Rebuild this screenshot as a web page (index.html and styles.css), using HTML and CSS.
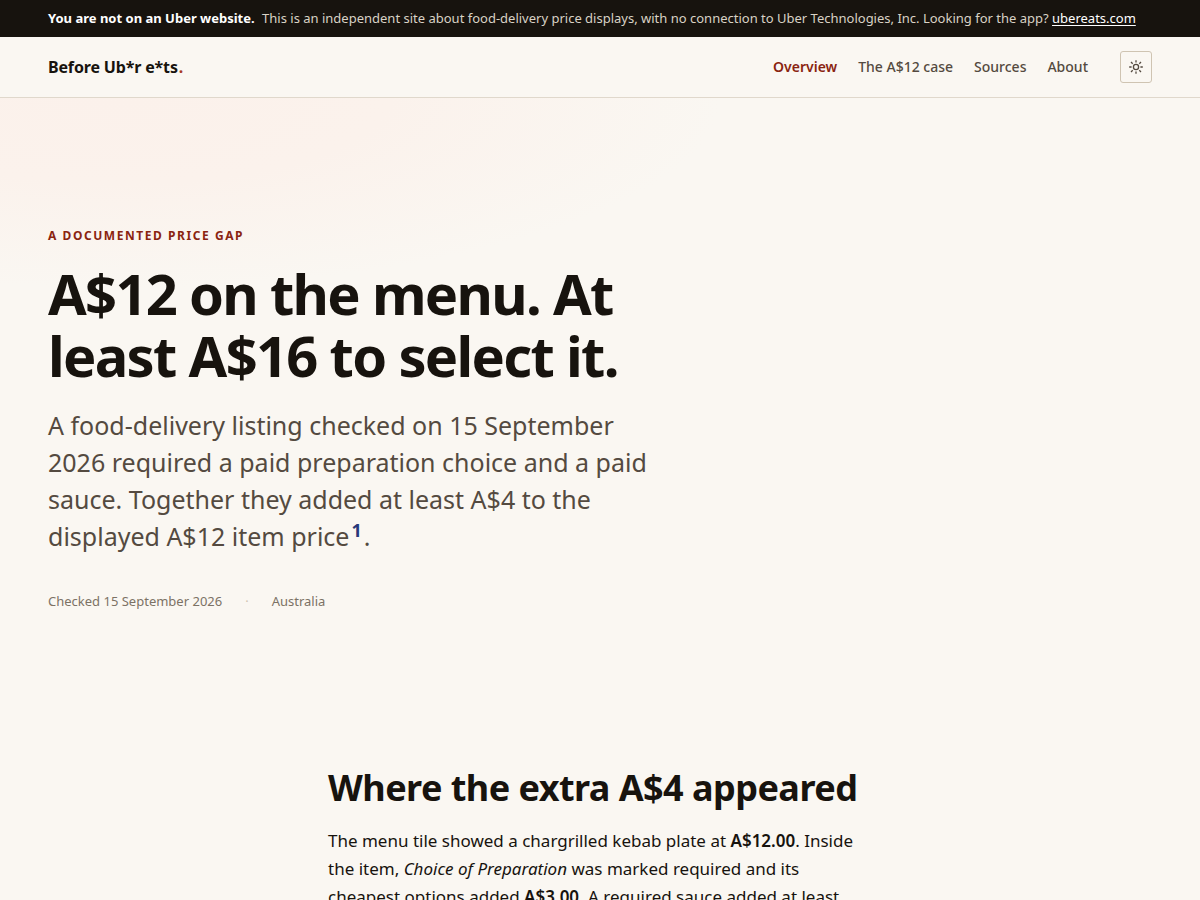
FILE: index.html
```html
<!DOCTYPE html>
<html lang="en">
<head>
  <meta charset="UTF-8">
  <meta name="viewport" content="width=device-width, initial-scale=1.0">
  <title>Before Ub*r e*ts</title>
  <link rel="stylesheet" href="styles.css">
</head>
<body>
  <div class="notice">
    <p><strong>You are not on an Uber website.</strong> This is an independent site about food-delivery price displays, with no connection to Uber Technologies, Inc. Looking for the app? <a href="#">ubereats.com</a></p>
  </div>
  <header class="site-header">
    <a class="brand" href="#">Before Ub*r e*ts<span>.</span></a>
    <nav class="nav">
      <a class="active" href="#">Overview</a>
      <a href="#">The A$12 case</a>
      <a href="#">Sources</a>
      <a href="#">About</a>
      <button class="theme-toggle" type="button" aria-label="Switch theme">
        <svg viewBox="0 0 16 16" width="16" height="16" fill="none" stroke="currentColor" stroke-width="1.3">
          <circle cx="8" cy="8" r="2.6"/>
          <path d="M8 1.2v2.4M8 12.4v2.4M1.2 8h2.4M12.4 8h2.4M3 3l1.7 1.7M11.3 11.3L13 13M3 13l1.7-1.7M11.3 4.7L13 3"/>
        </svg>
      </button>
    </nav>
  </header>
  <main>
    <section class="hero">
      <p class="eyebrow">A documented price gap</p>
      <h1>A$12 on the menu. At least A$16 to select it.</h1>
      <p class="lead">A food-delivery listing checked on 15 September 2026 required a paid preparation choice and a paid sauce. Together they added at least A$4 to the displayed A$12 item price<sup><a href="#">1</a></sup>.</p>
      <p class="meta"><span>Checked 15 September 2026</span><span class="dot">·</span><span>Australia</span></p>
    </section>
    <section class="article">
      <h2>Where the extra A$4 appeared</h2>
      <p>The menu tile showed a chargrilled kebab plate at <strong>A$12.00</strong>. Inside the item, <em>Choice of Preparation</em> was marked required and its cheapest options added <strong>A$3.00</strong>. A required sauce added at least</p>
    </section>
  </main>
</body>
</html>
```
FILE: styles.css
```css
* {
  box-sizing: border-box;
}
body {
  margin: 0;
  font-family: "Noto Sans", sans-serif;
  font-size: 17px;
  line-height: 28px;
  color: #17130e;
  background: #faf7f2;
}
h1, h2, p {
  margin: 0;
}
.notice {
  padding: 8px 48px;
  font-size: 13px;
  line-height: 21px;
  color: #d9d2c5;
  background: #17130e;
}
.notice strong {
  margin-right: 4px;
  color: #fff;
}
.notice a {
  color: #fff;
  text-underline-offset: 2px;
}
.site-header {
  display: flex;
  align-items: center;
  justify-content: space-between;
  padding: 14px 48px;
  border-bottom: 1px solid #e0d8cc;
}
.brand {
  font-size: 16px;
  line-height: 26px;
  font-weight: 700;
  letter-spacing: -0.01em;
  color: #17130e;
  text-decoration: none;
}
.brand span {
  margin-left: 1px;
  color: #a83a24;
}
.nav {
  display: flex;
  align-items: center;
  gap: 21px;
  font-size: 14px;
  font-weight: 500;
}
.nav a {
  color: #544a40;
  text-decoration: none;
}
.nav .active {
  font-weight: 600;
  color: #8a2410;
}
.theme-toggle {
  display: grid;
  place-items: center;
  width: 32px;
  height: 32px;
  margin-left: 11px;
  padding: 0;
  color: #544a40;
  background: none;
  border: 1px solid #cfc4b2;
  border-radius: 3px;
}
.hero {
  padding: 128px 48px 112px;
  background: radial-gradient(ellipse 600px 190px at 10% 0, #fbf1eb, #fbf2ec 45%, #faf7f2);
}
.eyebrow {
  font-size: 12px;
  line-height: 20px;
  font-weight: 700;
  letter-spacing: 0.13em;
  text-transform: uppercase;
  color: #8a2410;
}
h1 {
  max-width: 620px;
  margin-top: 16px;
  font-size: 56px;
  line-height: 62px;
  font-weight: 700;
  letter-spacing: -0.03em;
}
.lead {
  max-width: 608px;
  margin-top: 21px;
  font-size: 25px;
  line-height: 37px;
  color: #544a40;
}
.lead sup {
  margin: 0 2px;
  font-size: 18px;
  line-height: 0;
}
.lead sup a {
  font-weight: 700;
  color: #27397a;
  text-decoration: none;
}
.meta {
  display: flex;
  gap: 23px;
  margin-top: 36px;
  font-size: 13px;
  line-height: 20px;
  color: #7c7265;
}
.meta .dot {
  color: #cfc4b2;
}
.article {
  max-width: 640px;
  margin: 0 auto;
  padding: 42px 48px;
}
h2 {
  margin-bottom: 16px;
  font-size: 36px;
  line-height: 46px;
  font-weight: 700;
  letter-spacing: -0.015em;
}
.article strong {
  font-weight: 600;
}
```
